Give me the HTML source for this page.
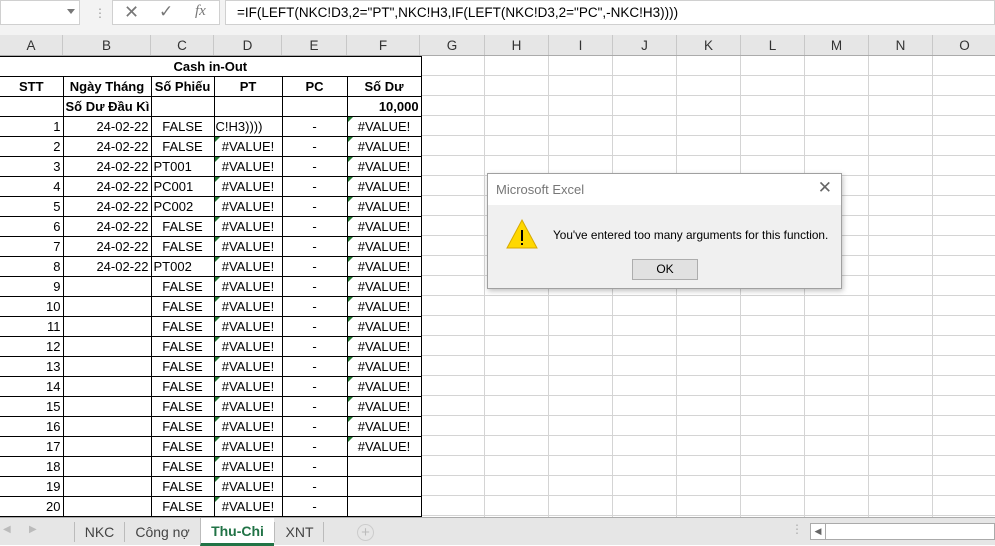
<!DOCTYPE html>
<html><head><meta charset="utf-8"><style>
*{box-sizing:border-box;margin:0;padding:0}
body{width:995px;height:545px;overflow:hidden;background:#fff;font-family:"Liberation Sans",sans-serif;position:relative;font-size:13px;color:#000}
.top{position:absolute;left:0;top:0;width:995px;height:35px;background:#f3f3f3}
.nb{position:absolute;left:0;top:0;width:80px;height:25px;background:#fff;border:1px solid #d0d0d0}
.fx{position:absolute;left:112px;top:0;width:108px;height:25px;background:#fff;border:1px solid #d0d0d0;color:#777;font-size:17px}
.fm{position:absolute;left:225px;top:0;width:770px;height:25px;background:#fff;border:1px solid #d0d0d0;padding:4px 0 0 11px;font-size:13.5px;white-space:nowrap}
.hdr{position:absolute;left:0;top:35px;width:995px;height:21px;background:#e6e6e6;border-bottom:1px solid #ababab}
.hdr div{position:absolute;top:0;height:20px;text-align:center;line-height:21px;border-right:1px solid #c8c8c8;color:#333;font-size:13.5px}
.grid{position:absolute;left:0;top:56px;width:995px;height:461px;
background-image:repeating-linear-gradient(to bottom,transparent 0 19px,#d4d4d4 19px 20px)}
.vl{position:absolute;top:56px;height:461px;width:1px;background:#d4d4d4}
table{position:absolute;left:0;top:56px;width:421px;border-collapse:collapse;table-layout:fixed;background:#fff}
td{height:20px;border:1px solid #000;padding:0 2px;white-space:nowrap;overflow:hidden;font-size:13px;line-height:18px}
.b{font-weight:bold;text-align:center}
.r{text-align:right}.c{text-align:center}
.g{position:relative}
.g:before{content:"";position:absolute;left:0;top:0;border-top:5px solid #1e7a2e;border-right:5px solid transparent}
.tabs{position:absolute;left:0;top:517px;width:995px;height:28px;background:#e6e6e6;border-top:1px solid #ababab}
.tab{position:absolute;top:4px;height:20px;line-height:20px;font-size:14px;color:#444;text-align:center;border-left:1px solid #bbb}
.dlg{position:absolute;left:487px;top:173px;width:355px;height:116px;background:#f0f0f0;border:1px solid #a0a0a0;box-shadow:1px 2px 5px rgba(0,0,0,.25)}
.dt{height:31px;background:#fff;color:#777;font-size:13px;padding:8px 0 0 8px}
</style></head><body>
<div class="top">
<div class="nb"><span style="position:absolute;left:66px;top:8px;border-top:5px solid #777;border-left:4px solid transparent;border-right:4px solid transparent"></span></div>
<span style="position:absolute;left:94px;top:6px;color:#999;font-size:12px">⋮</span>
<div class="fx"><span style="position:absolute;left:11px;top:1px;font-size:18px">✕</span><span style="position:absolute;left:46px;top:1px;font-size:17px">✓</span><span style="position:absolute;left:82px;top:2px;font-style:italic;font-family:'Liberation Serif',serif;font-size:15px">fx</span></div>
<div class="fm">=IF(LEFT(<span>NKC!D3</span>,2="PT",NKC!H3,IF(LEFT(NKC!D3,2="PC",-NKC!H3))))</div>
</div>
<div class="hdr">
<div style="left:0;width:63px">A</div><div style="left:63px;width:88px">B</div><div style="left:151px;width:63px">C</div><div style="left:214px;width:68px">D</div><div style="left:282px;width:65px">E</div><div style="left:347px;width:73px">F</div><div style="left:420px;width:65px">G</div><div style="left:485px;width:64px">H</div><div style="left:549px;width:64px">I</div><div style="left:613px;width:64px">J</div><div style="left:677px;width:64px">K</div><div style="left:741px;width:64px">L</div><div style="left:805px;width:64px">M</div><div style="left:869px;width:64px">N</div><div style="left:933px;width:64px">O</div>
</div>
<div class="grid"></div>
<div class="vl" style="left:484px"></div><div class="vl" style="left:548px"></div><div class="vl" style="left:612px"></div><div class="vl" style="left:676px"></div><div class="vl" style="left:740px"></div><div class="vl" style="left:804px"></div><div class="vl" style="left:868px"></div><div class="vl" style="left:932px"></div>
<table>
<colgroup><col style="width:63px"><col style="width:88px"><col style="width:63px"><col style="width:68px"><col style="width:65px"><col style="width:74px"></colgroup>
<tr><td colspan="6" class="b" style="border-left:none">Cash in-Out</td></tr>
<tr><td class="b" style="border-left:none">STT</td><td class="b">Ngày Tháng</td><td class="b">Số Phiếu</td><td class="b">PT</td><td class="b">PC</td><td class="b">Số Dư</td></tr>
<tr><td style="border-left:none"></td><td style="font-weight:bold">Số Dư Đầu Kì</td><td></td><td></td><td></td><td class="r" style="font-weight:bold">10,000</td></tr>
<tr><td class="r" style="border-left:none">1</td><td class="r">24-02-22</td><td class="c">FALSE</td><td style="padding-left:1px">C!H3))))</td><td class="c">-</td><td class="c g">#VALUE!</td></tr>
<tr><td class="r" style="border-left:none">2</td><td class="r">24-02-22</td><td class="c">FALSE</td><td class="c g">#VALUE!</td><td class="c">-</td><td class="c g">#VALUE!</td></tr>
<tr><td class="r" style="border-left:none">3</td><td class="r">24-02-22</td><td>PT001</td><td class="c g">#VALUE!</td><td class="c">-</td><td class="c g">#VALUE!</td></tr>
<tr><td class="r" style="border-left:none">4</td><td class="r">24-02-22</td><td>PC001</td><td class="c g">#VALUE!</td><td class="c">-</td><td class="c g">#VALUE!</td></tr>
<tr><td class="r" style="border-left:none">5</td><td class="r">24-02-22</td><td>PC002</td><td class="c g">#VALUE!</td><td class="c">-</td><td class="c g">#VALUE!</td></tr>
<tr><td class="r" style="border-left:none">6</td><td class="r">24-02-22</td><td class="c">FALSE</td><td class="c g">#VALUE!</td><td class="c">-</td><td class="c g">#VALUE!</td></tr>
<tr><td class="r" style="border-left:none">7</td><td class="r">24-02-22</td><td class="c">FALSE</td><td class="c g">#VALUE!</td><td class="c">-</td><td class="c g">#VALUE!</td></tr>
<tr><td class="r" style="border-left:none">8</td><td class="r">24-02-22</td><td>PT002</td><td class="c g">#VALUE!</td><td class="c">-</td><td class="c g">#VALUE!</td></tr>
<tr><td class="r" style="border-left:none">9</td><td></td><td class="c">FALSE</td><td class="c g">#VALUE!</td><td class="c">-</td><td class="c g">#VALUE!</td></tr>
<tr><td class="r" style="border-left:none">10</td><td></td><td class="c">FALSE</td><td class="c g">#VALUE!</td><td class="c">-</td><td class="c g">#VALUE!</td></tr>
<tr><td class="r" style="border-left:none">11</td><td></td><td class="c">FALSE</td><td class="c g">#VALUE!</td><td class="c">-</td><td class="c g">#VALUE!</td></tr>
<tr><td class="r" style="border-left:none">12</td><td></td><td class="c">FALSE</td><td class="c g">#VALUE!</td><td class="c">-</td><td class="c g">#VALUE!</td></tr>
<tr><td class="r" style="border-left:none">13</td><td></td><td class="c">FALSE</td><td class="c g">#VALUE!</td><td class="c">-</td><td class="c g">#VALUE!</td></tr>
<tr><td class="r" style="border-left:none">14</td><td></td><td class="c">FALSE</td><td class="c g">#VALUE!</td><td class="c">-</td><td class="c g">#VALUE!</td></tr>
<tr><td class="r" style="border-left:none">15</td><td></td><td class="c">FALSE</td><td class="c g">#VALUE!</td><td class="c">-</td><td class="c g">#VALUE!</td></tr>
<tr><td class="r" style="border-left:none">16</td><td></td><td class="c">FALSE</td><td class="c g">#VALUE!</td><td class="c">-</td><td class="c g">#VALUE!</td></tr>
<tr><td class="r" style="border-left:none">17</td><td></td><td class="c">FALSE</td><td class="c g">#VALUE!</td><td class="c">-</td><td class="c g">#VALUE!</td></tr>
<tr><td class="r" style="border-left:none">18</td><td></td><td class="c">FALSE</td><td class="c g">#VALUE!</td><td class="c">-</td><td></td></tr>
<tr><td class="r" style="border-left:none">19</td><td></td><td class="c">FALSE</td><td class="c g">#VALUE!</td><td class="c">-</td><td></td></tr>
<tr><td class="r" style="border-left:none">20</td><td></td><td class="c">FALSE</td><td class="c g">#VALUE!</td><td class="c">-</td><td></td></tr>
</table>
<div class="tabs">
<span style="position:absolute;left:3px;top:6px;color:#bbb;font-size:10px">◀</span><span style="position:absolute;left:29px;top:6px;color:#bbb;font-size:10px">▶</span>
<div class="tab" style="left:74px;width:50px">NKC</div>
<div class="tab" style="left:124px;width:76px">Công nợ</div>
<div class="tab" style="left:200px;width:74px;top:0;height:28px;line-height:26px;background:#fff;color:#217346;font-weight:bold;border-bottom:3px solid #217346">Thu-Chi</div>
<div class="tab" style="left:274px;width:50px">XNT</div>
<div style="position:absolute;left:323px;top:4px;height:20px;border-left:1px solid #bbb"></div>
<div style="position:absolute;left:357px;top:6px;width:17px;height:17px;border:1px solid #ccc;border-radius:50%;color:#bbb;text-align:center;line-height:15px;font-size:15px">+</div>
<span style="position:absolute;left:791px;top:4px;color:#aaa;font-size:12px">⋮</span>
<div style="position:absolute;left:810px;top:5px;width:185px;height:17px;background:#fff;border:1px solid #aaa"><div style="width:15px;height:15px;border-right:1px solid #aaa;color:#666;font-size:9px;text-align:center;line-height:15px">◀</div></div>
</div>
<div class="dlg">
<div class="dt">Microsoft Excel<span style="position:absolute;right:9px;top:4px;font-size:17px;color:#666">✕</span></div>
<svg style="position:absolute;left:17px;top:43px" width="34" height="34" viewBox="0 0 34 34"><polygon points="17,3 32,31 2,31" fill="#ffd800" stroke="#d7a900" stroke-width="1"/><rect x="16" y="13" width="2" height="11" fill="#000"/><rect x="16" y="26" width="2" height="2" fill="#000"/></svg>
<div style="position:absolute;left:65px;top:54px;font-size:11.8px">You've entered too many arguments for this function.</div>
<div style="position:absolute;left:144px;top:85px;width:66px;height:21px;border:1px solid #adadad;background:#e1e1e1;text-align:center;line-height:19px;font-size:12px">OK</div>
</div>
</body></html>
